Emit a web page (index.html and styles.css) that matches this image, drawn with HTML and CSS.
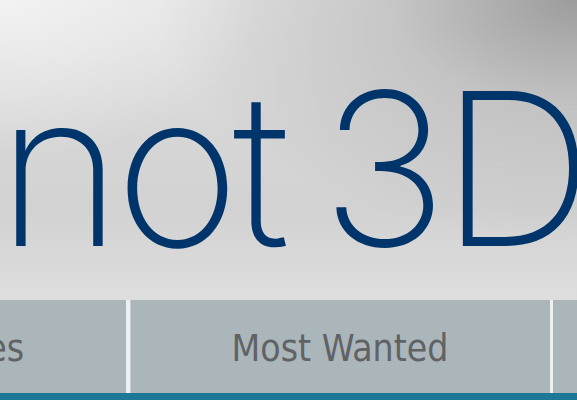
FILE: index.html
```html
<!DOCTYPE html>
<html>
<head>
<meta charset="utf-8">
<link rel="stylesheet" href="styles.css">
</head>
<body>
<header class="banner">
  <h1 class="title">not 3D</h1>
</header>
<nav class="tabs">
  <a class="tab tab-first">Favorites</a>
  <a class="tab tab-main">Most Wanted</a>
  <a class="tab tab-last">Contact</a>
</nav>
<div class="strip"></div>
</body>
</html>
```
FILE: styles.css
```css
html, body {
  margin: 0;
  padding: 0;
  width: 577px;
  height: 400px;
  overflow: hidden;
  background: #dcdcdc;
}
.banner {
  box-sizing: border-box;
  height: 300px;
  padding-top: 62px;
  overflow: hidden;
  background:
    radial-gradient(ellipse 260px 160px at 0 0, rgba(255,255,255,0.55), rgba(255,255,255,0) 100%),
    radial-gradient(ellipse 420px 240px at 100% 0, #9c9c9c 0%, rgba(180,180,180,0.6) 45%, rgba(200,200,200,0) 100%),
    linear-gradient(to bottom, #e4e4e4 0%, #d6d6d6 45%, #d2d2d2 70%, #dedede 100%);
}
.title {
  margin: 0 0 0 -3px;
  font-family: "Inter", "Open Sans", sans-serif;
  font-weight: 200;
  font-size: 213px;
  line-height: 213px;
  color: #00356b;
  white-space: nowrap;
  letter-spacing: -7px;
  word-spacing: -15px;
}
.tabs {
  display: flex;
  height: 93px;
  background: #abb6bb;
  overflow: hidden;
}
.tab {
  display: flex;
  align-items: center;
  justify-content: center;
  min-width: 0;
  flex-shrink: 0;
  font-family: "DejaVu Sans Condensed", "DejaVu Sans", sans-serif;
  font-stretch: condensed;
  font-size: 37px;
  color: #606264;
  white-space: nowrap;
  padding-top: 4px;
  box-sizing: border-box;
}
.tab-first {
  flex: 0 0 126px;
  justify-content: flex-end;
  padding-right: 102px;
}
.tab-main {
  flex: 0 0 424px;
  border-left: 4px solid #eef0f0;
  box-shadow: inset 1px 0 0 #c8cfd2;
}
.tab-last {
  flex: 0 0 320px;
  border-left: 3px solid #eef0f0;
}
.strip {
  height: 7px;
  background: #1d7897;
}
```
